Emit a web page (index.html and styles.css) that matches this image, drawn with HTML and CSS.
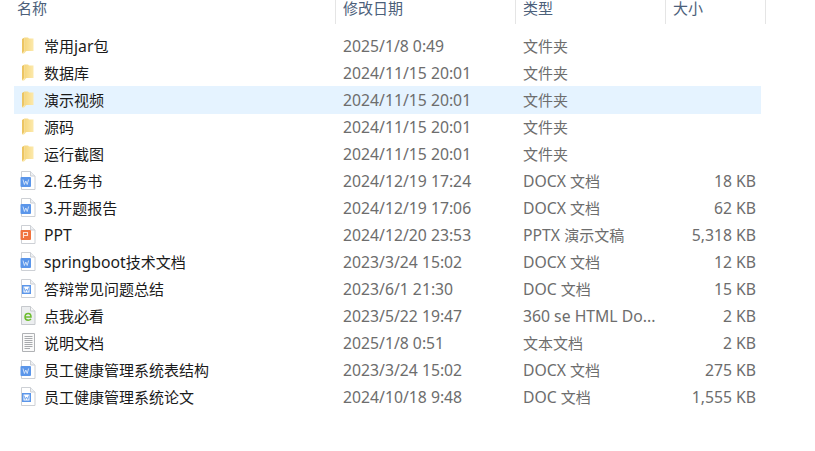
FILE: index.html
```html
<!DOCTYPE html>
<html lang="zh-CN">
<head>
<meta charset="utf-8">
<title>文件列表</title>
<link rel="stylesheet" href="styles.css">
</head>
<body>
<svg class="defs" width="0" height="0" aria-hidden="true">
  <defs>
    <linearGradient id="fold" x1="0" y1="0" x2="1" y2="0">
      <stop offset="0" stop-color="#f6d77e"/><stop offset="1" stop-color="#fce9ac"/>
    </linearGradient>
    <symbol id="folder" viewBox="0 0 16 19">
      <path d="M2 3 L4.5 1.5 L4.5 15 L2 17.5 Z" fill="#ecc562"/>
      <path d="M4.5 1.5 H8 L9 2.5 H13.5 V15 H4.5 Z" fill="url(#fold)"/>
      <path d="M2 17.5 L4.5 15 H6.5 L4 17.5 Z" fill="#f9e29c"/>
    </symbol>
    <symbol id="page" viewBox="0 0 16 19">
      <path d="M1.5 .5 H10.5 L15 5 V18.5 H1.5 Z" fill="#fff" stroke="#cdd0d5"/>
      <path d="M10.5 .5 V5 H15" fill="#eef0f3" stroke="#cdd0d5"/>
    </symbol>
    <symbol id="docx" viewBox="0 0 16 19">
      <use href="#page" width="16" height="19"/>
      <rect x="0.5" y="6" width="10.5" height="10" rx="1" fill="#5b96ea"/>
      <path d="M3 8.5 L4.4 13.5 L5.8 10 L7.2 13.5 L8.6 8.5" fill="none" stroke="#dbe9fb" stroke-width=".9"/>
    </symbol>
    <symbol id="doc" viewBox="0 0 16 19">
      <use href="#page" width="16" height="19"/>
      <rect x="2" y="6" width="9" height="9" fill="#5b96ea"/>
      <rect x="3.5" y="7.5" width="6" height="6" fill="#fff"/>
      <path d="M4 8.5 L5.2 12.5 L6.5 10 L7.8 12.5 L9 8.5" fill="none" stroke="#5b96ea" stroke-width=".8"/>
    </symbol>
    <symbol id="ppt" viewBox="0 0 16 19">
      <use href="#page" width="16" height="19"/>
      <rect x="0.5" y="5" width="10.5" height="10" rx="1" fill="#f0733e"/>
      <path d="M3.5 13 V7.5 H7.5 V10.5 H3.5" fill="none" stroke="#fde3d6" stroke-width="1.1"/>
    </symbol>
    <symbol id="html" viewBox="0 0 16 19">
      <path d="M1.5 .5 H10.5 L15 5 V18.5 H1.5 Z" fill="#eceef0" stroke="#c6c9cd"/>
      <path d="M10.5 .5 V5 H15" fill="#f8f8f8" stroke="#c6c9cd"/>
      <path d="M5 11 H11 C11 8.5 9.8 7.5 8.2 7.5 C6.2 7.5 5 9 5 11 C5 13.2 6.5 14.2 8.2 14.2 C9.4 14.2 10.3 13.8 11 13" fill="none" stroke="#6cbc2e" stroke-width="1.5"/>
    </symbol>
    <symbol id="txt" viewBox="0 0 16 19">
      <path d="M2.5 .5 H14.5 V18.5 H2.5 Z" fill="#fafafa" stroke="#b0b2b5"/>
      <path d="M4.5 3.5 H12.5 M4.5 5.5 H12.5 M4.5 7.5 H12.5 M4.5 9.5 H12.5 M4.5 11.5 H12.5 M4.5 13.5 H12.5 M4.5 15.5 H10" stroke="#a8aaad"/>
    </symbol>
  </defs>
</svg>
<main class="list">
  <div class="head">
    <div class="hcell c-name">名称</div>
    <div class="hcell c-date">修改日期</div>
    <div class="hcell c-type">类型</div>
    <div class="hcell c-size">大小</div>
  </div>
  <div class="rows">
    <div class="row"><div class="c-name"><svg class="ico"><use href="#folder"/></svg><span>常用<span class="lat">jar</span>包</span></div><div class="c-date">2025/1/8 0:49</div><div class="c-type">文件夹</div><div class="c-size"></div></div>
    <div class="row"><div class="c-name"><svg class="ico"><use href="#folder"/></svg><span>数据库</span></div><div class="c-date">2024/11/15 20:01</div><div class="c-type">文件夹</div><div class="c-size"></div></div>
    <div class="row sel"><div class="c-name"><svg class="ico"><use href="#folder"/></svg><span>演示视频</span></div><div class="c-date">2024/11/15 20:01</div><div class="c-type">文件夹</div><div class="c-size"></div></div>
    <div class="row"><div class="c-name"><svg class="ico"><use href="#folder"/></svg><span>源码</span></div><div class="c-date">2024/11/15 20:01</div><div class="c-type">文件夹</div><div class="c-size"></div></div>
    <div class="row"><div class="c-name"><svg class="ico"><use href="#folder"/></svg><span>运行截图</span></div><div class="c-date">2024/11/15 20:01</div><div class="c-type">文件夹</div><div class="c-size"></div></div>
    <div class="row"><div class="c-name"><svg class="ico"><use href="#docx"/></svg><span><span class="lat">2.</span>任务书</span></div><div class="c-date">2024/12/19 17:24</div><div class="c-type"><span class="lat">DOCX </span>文档</div><div class="c-size">18 KB</div></div>
    <div class="row"><div class="c-name"><svg class="ico"><use href="#docx"/></svg><span><span class="lat">3.</span>开题报告</span></div><div class="c-date">2024/12/19 17:06</div><div class="c-type"><span class="lat">DOCX </span>文档</div><div class="c-size">62 KB</div></div>
    <div class="row"><div class="c-name"><svg class="ico"><use href="#ppt"/></svg><span class="lat">PPT</span></div><div class="c-date">2024/12/20 23:53</div><div class="c-type"><span class="lat">PPTX </span>演示文稿</div><div class="c-size">5,318 KB</div></div>
    <div class="row"><div class="c-name"><svg class="ico"><use href="#docx"/></svg><span><span class="lat">springboot</span>技术文档</span></div><div class="c-date">2023/3/24 15:02</div><div class="c-type"><span class="lat">DOCX </span>文档</div><div class="c-size">12 KB</div></div>
    <div class="row"><div class="c-name"><svg class="ico"><use href="#doc"/></svg><span>答辩常见问题总结</span></div><div class="c-date">2023/6/1 21:30</div><div class="c-type"><span class="lat">DOC </span>文档</div><div class="c-size">15 KB</div></div>
    <div class="row"><div class="c-name"><svg class="ico"><use href="#html"/></svg><span>点我必看</span></div><div class="c-date">2023/5/22 19:47</div><div class="c-type"><span class="lat">360 se HTML Do...</span></div><div class="c-size">2 KB</div></div>
    <div class="row"><div class="c-name"><svg class="ico"><use href="#txt"/></svg><span>说明文档</span></div><div class="c-date">2025/1/8 0:51</div><div class="c-type">文本文档</div><div class="c-size">2 KB</div></div>
    <div class="row"><div class="c-name"><svg class="ico"><use href="#docx"/></svg><span>员工健康管理系统表结构</span></div><div class="c-date">2023/3/24 15:02</div><div class="c-type"><span class="lat">DOCX </span>文档</div><div class="c-size">275 KB</div></div>
    <div class="row"><div class="c-name"><svg class="ico"><use href="#doc"/></svg><span>员工健康管理系统论文</span></div><div class="c-date">2024/10/18 9:48</div><div class="c-type"><span class="lat">DOC </span>文档</div><div class="c-size">1,555 KB</div></div>
  </div>
</main>
</body>
</html>
```
FILE: styles.css
```css
html, body {
  margin: 0;
  padding: 0;
  background: #fff;
}
body {
  width: 815px;
  height: 451px;
  overflow: hidden;
  font-family: "Noto Sans", "Noto Sans CJK SC", sans-serif;
  font-size: 15px;
}
.defs {
  display: block;
  height: 0;
}
.lat {
  font-size: 15.75px;
}
.list {
  display: flex;
  flex-direction: column;
}
.head {
  display: flex;
  height: 24px;
  color: #4c607a;
}
.hcell {
  box-sizing: border-box;
  line-height: 17px;
  border-right: 1px solid #e5e5e5;
}
.head .c-name { width: 336px; padding-left: 17px; }
.head .c-date { width: 180px; padding-left: 7px; }
.head .c-type { width: 150px; padding-left: 7px; }
.head .c-size { width: 100px; padding-left: 7px; }
.rows {
  display: flex;
  flex-direction: column;
  margin-top: 8px;
  margin-left: 14px;
  width: 747px;
}
.row {
  box-sizing: border-box;
  display: flex;
  align-items: center;
  height: 27px;
  padding-top: 2px;
  line-height: 25px;
  color: #6d6d6d;
  white-space: nowrap;
}
.row.sel {
  background: #e5f3ff;
  box-shadow: 0 1px 0 #e5f3ff;
}
.row .c-name {
  display: flex;
  align-items: center;
  width: 322px;
  color: #1a1a1a;
}
.ico {
  width: 16px;
  height: 19px;
  margin: 0 8px 3px 6px;
  flex: none;
}
.row .c-date { width: 180px; padding-left: 7px; box-sizing: border-box; font-size: 15.75px; }
.row .c-type { width: 150px; padding-left: 7px; box-sizing: border-box; }
.row .c-size { width: 90px; text-align: right; font-size: 15.75px; }
```
